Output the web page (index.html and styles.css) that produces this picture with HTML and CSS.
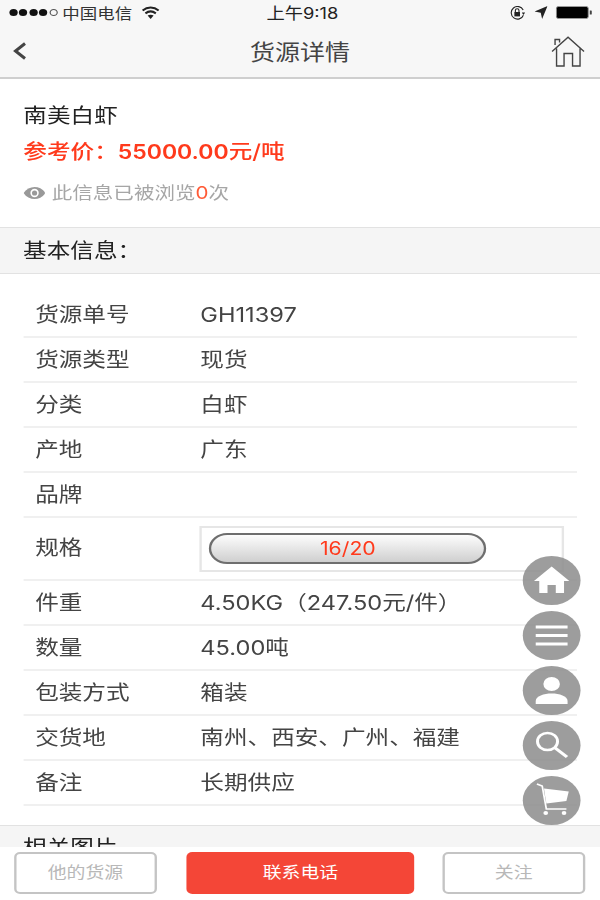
FILE: index.html
```html
<!DOCTYPE html>
<html lang="zh-CN">
<head>
<meta charset="utf-8">
<title>货源详情</title>
<link rel="stylesheet" href="styles.css">
</head>
<body>
<div class="screen">
  <header class="top">
    <div class="status">
      <div class="status-left">
        <span class="signal"><i></i><i></i><i></i><i></i><i class="off"></i></span>
        <span>中国电信</span>
        <svg class="ic-wifi" viewBox="0 0 18 13" preserveAspectRatio="none"><path d="M1 4.5C5.8 .6 12.2 .6 17 4.5M3.8 7.4C6.9 5 11.1 5 14.2 7.4" fill="none" stroke="#222" stroke-width="2"/><path d="M6 9.6C7.9 8.4 10.1 8.4 12 9.6L9 13Z" fill="#222"/></svg>
      </div>
      <div class="clock">上午9:18</div>
      <div class="status-right">
        <svg class="ic-lock" viewBox="0 0 16 14" preserveAspectRatio="none"><path d="M13.6 9.2A6.3 6.3 0 1 1 13.4 4" fill="none" stroke="#222" stroke-width="1.1"/><path d="M12 6.6h3.4L13.6 9Z" fill="#222"/><rect x="4.6" y="6" width="5.6" height="4.4" fill="#222"/><path d="M5.6 6V4.6a1.8 1.8 0 0 1 3.6 0V6" fill="none" stroke="#222" stroke-width="1.1"/></svg>
        <svg class="ic-arrow" viewBox="0 0 13 13" preserveAspectRatio="none"><path d="M13 0L7.6 13 6.2 6.8 0 5.4Z" fill="#222"/></svg>
        <svg class="ic-battery" viewBox="0 0 36 13" preserveAspectRatio="none"><rect x=".5" y=".5" width="32" height="12" rx="2" fill="#000" stroke="#999"/><path d="M34 4.5h1.4a.6.6 0 0 1 .6.6v2.8a.6.6 0 0 1-.6.6H34Z" fill="#444"/></svg>
      </div>
    </div>
    <nav class="nav">
      <svg class="ic-back" viewBox="0 0 14 18" preserveAspectRatio="none"><path d="M12 1.5L2.5 9 12 16.5" fill="none" stroke="#444" stroke-width="3"/></svg>
      <h1 class="nav-title">货源详情</h1>
      <svg class="ic-home" viewBox="0 0 34 31" preserveAspectRatio="none"><path d="M1 15.5L17 1.2 33 15.5M5.5 12.5V30H13V17.5H21.5V30H29V12.5M4 9V3.5H8.5V6.5" fill="none" stroke="#444" stroke-width="1.4"/></svg>
    </nav>
  </header>

  <main class="content">
    <section class="summary">
      <h2 class="goods-name">南美白虾</h2>
      <p class="price">参考价：<span class="price-num">55000.00</span>元/吨</p>
      <p class="views">
        <svg class="ic-eye" viewBox="0 0 22 14" preserveAspectRatio="none"><path d="M0 7C5 -1 17 -1 22 7 17 15 5 15 0 7Z" fill="#999"/><circle cx="11" cy="7" r="4.2" fill="#fff"/><circle cx="11" cy="7" r="2.6" fill="#999"/></svg>
        此信息已被浏览<em>0</em>次
      </p>
    </section>

    <div class="section-head">基本信息：</div>

    <div class="rows">
      <div class="row"><span class="key">货源单号</span><span class="val">GH11397</span></div>
      <div class="row"><span class="key">货源类型</span><span class="val">现货</span></div>
      <div class="row"><span class="key">分类</span><span class="val">白虾</span></div>
      <div class="row"><span class="key">产地</span><span class="val">广东</span></div>
      <div class="row"><span class="key">品牌</span><span class="val"></span></div>
      <div class="row row-spec">
        <span class="key">规格</span>
        <div class="spec-box"><div class="spec-pill">16/20</div></div>
      </div>
      <div class="row"><span class="key">件重</span><span class="val">4.50KG（247.50元/件）</span></div>
      <div class="row"><span class="key">数量</span><span class="val">45.00吨</span></div>
      <div class="row"><span class="key">包装方式</span><span class="val">箱装</span></div>
      <div class="row"><span class="key">交货地</span><span class="val">南州、西安、广州、福建</span></div>
      <div class="row"><span class="key">备注</span><span class="val">长期供应</span></div>
    </div>

    <div class="section-head section-photos">相关图片</div>
  </main>

  <footer class="actions">
    <button class="btn btn-line btn-side">他的货源</button>
    <button class="btn btn-call">联系电话</button>
    <button class="btn btn-line btn-side">关注</button>
  </footer>

  <!-- floating shortcut menu -->
  <div class="fab-list">
    <div class="fab"><svg viewBox="0 0 49 49"><path d="M24.5 10.5L9.500 25H14V37H21V29H28V37H35V25H39.500Z" fill="#fff"/></svg></div>
    <div class="fab"><svg viewBox="0 0 49 49"><path d="M11 14.500H38V17.500H11ZM11 23H38V26H11ZM11 31.500H38V34.500H11Z" fill="#fff"/></svg></div>
    <div class="fab"><svg viewBox="0 0 49 49"><circle cx="24.500" cy="18" r="7" fill="#fff"/><path d="M11 38V35C11 30 18 27.500 24.500 27.500S38 30 38 35V38Z" fill="#fff"/></svg></div>
    <div class="fab"><svg viewBox="0 0 49 49"><circle cx="21" cy="20.500" r="8.500" fill="none" stroke="#fff" stroke-width="2.500"/><path d="M27.500 27L37.500 36" stroke="#fff" stroke-width="3" fill="none"/></svg></div>
    <div class="fab"><svg viewBox="0 0 49 49"><path d="M12 8L16.500 10 20 33H37" fill="none" stroke="#fff" stroke-width="1.500"/><path d="M18 12.500L39 15.500 37 25 20 27.500Z" fill="#fff"/><circle cx="19.500" cy="37" r="2" fill="#fff"/><circle cx="35" cy="37" r="2" fill="#fff"/></svg></div>
  </div>
</div>
</body>
</html>
```

FILE: styles.css
```css
html, body {
  margin: 0;
  padding: 0;
  height: 900px;
  overflow: hidden;
  background: #fff;
}

.screen {
  position: relative;
  width: 508.5px;
  height: 900px;
  transform: scaleX(1.18);
  transform-origin: 0 0;
  display: flex;
  flex-direction: column;
  overflow: hidden;
  font-family: Inter, "Noto Sans CJK SC", sans-serif;
  color: #333;
}

/* Top bars */
.top {
  flex: none;
  height: 77px;
  background: #f7f7f7;
  border-bottom: 2px solid #cfcfcf;
}

.status {
  height: 25px;
  display: grid;
  grid-template-columns: 1fr auto 1fr;
  align-items: center;
  font-size: 14.8px;
  color: #333;
}

.status-left {
  display: flex;
  align-items: center;
  padding-left: 7.6px;
}

.signal {
  display: flex;
  gap: 1.5px;
  margin-right: 4.2px;
}

.signal i {
  width: 7px;
  height: 7px;
  border-radius: 50%;
  background: #111;
  box-sizing: border-box;
}

.signal i.off {
  background: none;
  border: 1px solid #555;
}

.ic-wifi {
  width: 15.3px;
  height: 13px;
  margin-left: 8.5px;
}

.clock {
  font-size: 15.5px;
  color: #222;
  padding: 0 0 2px 4px;
}

.status-right {
  display: flex;
  align-items: center;
  justify-content: flex-end;
  padding-right: 6.8px;
}

.ic-lock {
  width: 13.6px;
  height: 14px;
}

.ic-arrow {
  width: 11px;
  height: 13px;
  margin-left: 7.5px;
}

.ic-battery {
  width: 30.5px;
  height: 13px;
  margin-left: 6.8px;
}

.nav {
  height: 52px;
  display: grid;
  grid-template-columns: 1fr auto 1fr;
  align-items: center;
  padding: 0 11.2px 0 11px;
}

.ic-back {
  width: 11.9px;
  height: 18px;
}

.nav-title {
  margin: 0 0 2px;
  font-size: 21.2px;
  font-weight: 400;
  color: #444;
}

.ic-home {
  justify-self: end;
  margin-right: 1.5px;
  width: 28.8px;
  height: 31px;
}

/* Scrolling body */
.content {
  flex: 1;
  min-height: 0;
  overflow: hidden;
}

.summary {
  height: 148px;
  padding: 0 19.8px;
  box-sizing: border-box;
}

.goods-name {
  margin: 0;
  padding-top: 23px;
  font-size: 20px;
  line-height: 28px;
  font-weight: 400;
  color: #222;
}

.price {
  margin: 8px 0 0;
  font-size: 20px;
  line-height: 28px;
  font-weight: 500;
  color: #ff3a1c;
}

.price-num {
  font-weight: 600;
  font-size: 19.5px;
}

.views {
  display: flex;
  align-items: center;
  margin: 13px 0 0;
  font-size: 17.4px;
  line-height: 28px;
  color: #a6a6a6;
}

.views em {
  font-style: normal;
  color: #ff5a36;
}

.ic-eye {
  width: 18.6px;
  height: 14px;
  margin-right: 5.5px;
}

.section-head {
  height: 47px;
  box-sizing: border-box;
  padding: 0 0 3px 19.6px;
  display: flex;
  align-items: center;
  background: #f5f5f5;
  border-top: 1px solid #e2e2e2;
  border-bottom: 1px solid #e2e2e2;
  font-size: 20px;
  color: #222;
}

.rows {
  margin: 19px 19.5px 0 20.3px;
}

/* Key and value share a baseline, so Latin-only values sit level with Chinese ones. */
.row {
  height: 45px;
  box-sizing: border-box;
  display: flex;
  align-items: baseline;
  border-bottom: 2px solid #f0f0f0;
  padding: 5.5px 0 0 9.5px;
  font-size: 20px;
  color: #444;
}

.key {
  flex: none;
  width: 140px;
}

.row-spec {
  height: 63px;
  padding-top: 0;
  align-items: flex-start;
}

.row-spec .key {
  margin-top: 13.5px;
}

.spec-box {
  width: 309px;
  height: 46px;
  box-sizing: border-box;
  border: 2px solid #e6e6e6;
  padding: 5px 6px;
  margin: 8px 0 0 -.5px;
}

.spec-pill {
  width: 235px;
  height: 31px;
  box-sizing: border-box;
  border: 2px solid #6e6e6e;
  border-radius: 16px;
  background: linear-gradient(#fdfdfd, #cfcfcf);
  text-align: center;
  line-height: 27px;
  font-size: 18px;
  color: #ff3a1c;
}

.section-photos {
  margin-top: 19px;
  align-items: flex-start;
  padding-top: 6px;
}

/* Bottom action bar */
.actions {
  flex: none;
  height: 53px;
  box-sizing: border-box;
  background: #fff;
  display: flex;
  justify-content: space-between;
  align-items: flex-start;
  padding: 5px 12.7px 0 11.9px;
}

.btn {
  height: 42px;
  box-sizing: border-box;
  border-radius: 5px;
  font: inherit;
  font-size: 16px;
  padding: 0 0 4px;
}

.btn-line {
  background: #fff;
  border: 2px solid #c4c4c4;
  color: #b8b8b8;
}

.btn-side {
  width: 121px;
}

.btn-call {
  width: 193.2px;
  margin-left: 1.5px;
  background: #f44637;
  border: 0;
  color: #fff;
}

/* Floating shortcuts */
.fab-list {
  position: absolute;
  top: 556px;
  right: 17px;
  display: flex;
  flex-direction: column;
  gap: 6px;
}

.fab {
  width: 49px;
  height: 49px;
  border-radius: 50%;
  background: rgba(140, 140, 140, 0.85);
}

.fab svg {
  display: block;
  width: 49px;
  height: 49px;
}
```
